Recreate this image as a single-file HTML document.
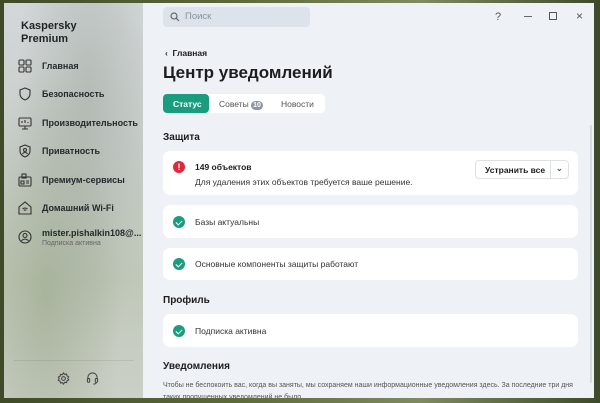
<!DOCTYPE html><html><head><meta charset="utf-8"><style>
*{margin:0;padding:0;box-sizing:border-box}
body{width:600px;height:403px;overflow:hidden;position:relative;font-family:"Liberation Sans","Noto Sans CJK SC",sans-serif;background:linear-gradient(90deg,#3f4a28,#5d6a3a 40%,#7f8a60 70%,#3d4a2a);color:#1d1d1f}
.win{position:absolute;left:4px;top:3px;width:590px;height:395px;overflow:hidden;background:#eef1f5}
.side{position:absolute;left:0;top:0;width:139px;height:395px;background:
radial-gradient(ellipse at 60% 25%,rgba(150,160,150,.45),transparent 60%),
radial-gradient(ellipse at 30% 75%,rgba(140,155,120,.45),transparent 55%),
linear-gradient(180deg,#d3d7d9,#c8cec9 40%,#c0c8b9 70%,#cbd0c8)}
.logo{position:absolute;left:17px;top:17px;font-size:11px;line-height:13px;font-weight:bold;color:#1f2326}
.nav{position:absolute;left:14px;font-size:9px;font-weight:bold;color:#25292c;display:flex;align-items:center;white-space:nowrap}
.nav svg{width:14px;height:14px;margin-right:10px;flex:none}
.main{position:absolute;left:139px;top:0;width:451px;height:395px}
.search{position:absolute;left:20px;top:4px;width:147px;height:20px;background:#dde3ea;border-radius:4px;font-size:9.5px;color:#8a919a;padding:4px 0 0 22px}
.ctl{position:absolute;top:8px;font-size:11px;color:#555}
.back{position:absolute;left:22px;top:45px;font-size:8.5px;font-weight:bold}
h1{position:absolute;left:20px;top:60px;font-size:17px;font-weight:bold}
.tabs{position:absolute;left:20px;top:91px;width:162px;height:19px;background:#fff;border-radius:4px;font-size:8.5px}
.tabs span{position:absolute;top:5px}
.sec{position:absolute;left:20px;font-size:10px;font-weight:bold}
.card{position:absolute;left:20px;width:415px;background:#fff;border-radius:7px;font-size:8.5px}
.ok{position:absolute;left:10px;width:12px;height:12px;border-radius:50%;background:#1a9d7f}
.ok:after{content:"";position:absolute;left:3.5px;top:2.5px;width:3px;height:5px;border:solid #fff;border-width:0 1.5px 1.5px 0;transform:rotate(45deg)}
.card .t{position:absolute;left:32px}
</style></head><body>
<div class="win">
<div class="side">
<div class="logo">Kaspersky<br>Premium</div>
<div class="nav" style="top:56px"><svg viewBox="0 0 14 14" fill="none" stroke="#333" stroke-width="1.1"><rect x="1" y="1" width="5" height="5" rx="1"/><rect x="8" y="1" width="5" height="5" rx="1"/><rect x="1" y="8" width="5" height="5" rx="1"/><rect x="8" y="8" width="5" height="5" rx="1"/></svg>Главная</div>
<div class="nav" style="top:84px"><svg viewBox="0 0 14 14" fill="none" stroke="#333" stroke-width="1.1"><path d="M7 1L2 3v4c0 3 2.5 5 5 6 2.5-1 5-3 5-6V3z"/></svg>Безопасность</div>
<div class="nav" style="top:113px"><svg viewBox="0 0 14 14" fill="none" stroke="#333" stroke-width="1.1"><rect x="1" y="2" width="12" height="8" rx="1"/><path d="M7 10v3M4 13h6M4 7V5M7 7V4M10 7V6"/></svg>Производительность</div>
<div class="nav" style="top:141px"><svg viewBox="0 0 14 14" fill="none" stroke="#333" stroke-width="1.1"><path d="M7 1L2 3v4c0 3 2.5 5 5 6 2.5-1 5-3 5-6V3z"/><circle cx="7" cy="6" r="1.5"/><path d="M4.5 10c1-2 4-2 5 0"/></svg>Приватность</div>
<div class="nav" style="top:170px"><svg viewBox="0 0 14 14" fill="none" stroke="#333" stroke-width="1.1"><rect x="1" y="4" width="12" height="9" rx="1"/><rect x="4" y="1" width="4" height="4"/><path d="M8 8h3M8 10h3M3 8h3v3H3z"/></svg>Премиум-сервисы</div>
<div class="nav" style="top:198px"><svg viewBox="0 0 14 14" fill="none" stroke="#333" stroke-width="1.1"><path d="M1 6l6-5 6 5v7H1z"/><path d="M4.5 8c1.5-1.3 3.5-1.3 5 0M5.8 9.5c.7-.6 1.7-.6 2.4 0"/></svg>Домашний Wi-Fi</div>
<div class="nav" style="top:225px;align-items:flex-start"><svg viewBox="0 0 14 14" fill="none" stroke="#333" stroke-width="1.1" style="margin-top:2px"><circle cx="7" cy="7" r="6"/><circle cx="7" cy="5.5" r="2"/><path d="M3.5 11c1.5-2.5 5.5-2.5 7 0"/></svg><div>mister.pishalkin108@...<div style="font-size:7px;font-weight:normal;color:#666;margin-top:2px">Подписка активна</div></div></div>
<div style="position:absolute;left:10px;top:357px;width:120px;height:1px;background:rgba(0,0,0,.08)"></div>
<svg style="position:absolute;left:53px;top:369px" width="13" height="13" viewBox="0 0 14 14" fill="none" stroke="#444" stroke-width="1.1"><circle cx="7" cy="7" r="2"/><path d="M7 1l1.3 1.6 2-.5.4 2 1.9.9-1 1.8 1 1.8-1.9.9-.4 2-2-.5L7 13l-1.3-1.6-2 .5-.4-2-1.9-.9 1-1.8-1-1.8 1.9-.9.4-2 2 .5z"/></svg>
<svg style="position:absolute;left:82px;top:369px" width="13" height="13" viewBox="0 0 14 14" fill="none" stroke="#444" stroke-width="1.1"><path d="M2 8V6a5 5 0 0110 0v2"/><rect x="1.5" y="7" width="2.5" height="4" rx="1"/><rect x="10" y="7" width="2.5" height="4" rx="1"/><path d="M11 11c0 1.5-1.5 2-3 2"/></svg>
</div>
<div class="main">
<div class="search"><svg style="position:absolute;left:7px;top:5px" width="10" height="10" viewBox="0 0 10 10" fill="none" stroke="#666" stroke-width="1.2"><circle cx="4" cy="4" r="3"/><path d="M6.3 6.3L9 9"/></svg>Поиск</div>
<div class="ctl" style="left:352px">?</div>
<div style="position:absolute;left:381px;top:13px;width:8px;height:1px;background:#666"></div>
<div style="position:absolute;left:406px;top:9px;width:8px;height:8px;border:1px solid #555"></div>
<div class="ctl" style="left:433px;top:6px;font-size:12px">×</div>
<div class="back">‹&nbsp;&nbsp;Главная</div>
<h1>Центр уведомлений</h1>
<div class="tabs"><div style="position:absolute;left:0;top:0;width:46px;height:19px;background:#1a9d7f;border-radius:4px"></div>
<span style="left:10px;color:#fff;font-weight:bold">Статус</span>
<span style="left:56px;color:#555">Советы <b style="display:inline-block;background:#8d96a3;color:#fff;border-radius:6px;font-size:7px;padding:1px 2px">10</b></span>
<span style="left:118px;color:#555">Новости</span></div>
<div style="position:absolute;left:447px;top:122px;width:2px;height:258px;background:#d6dbe1;border-radius:1px"></div>
<div class="sec" style="top:129px">Защита</div>
<div class="card" style="top:148px;height:44px">
<div style="position:absolute;left:10px;top:10px;width:12px;height:12px;border-radius:50%;background:#e0283c;color:#fff;font-size:9px;font-weight:bold;text-align:center;line-height:12px">!</div>
<div class="t" style="top:11px;font-weight:bold">149 объектов</div>
<div class="t" style="top:26px;color:#333">Для удаления этих объектов требуется ваше решение.</div>
<div style="position:absolute;left:312px;top:9px;width:94px;height:19px;border:1px solid #dde1e6;border-radius:4px;font-weight:bold"><span style="position:absolute;left:9px;top:4px">Устранить все</span><div style="position:absolute;left:74px;top:0;width:1px;height:17px;background:#dde1e6"></div><span style="position:absolute;left:80px;top:3px;font-size:8px;color:#555">⌄</span></div>
</div>
<div class="card" style="top:202px;height:33px"><div class="ok" style="top:11px"></div><div class="t" style="top:12px;color:#333">Базы актуальны</div></div>
<div class="card" style="top:245px;height:32px"><div class="ok" style="top:10px"></div><div class="t" style="top:11px;color:#333">Основные компоненты защиты работают</div></div>
<div class="sec" style="top:292px">Профиль</div>
<div class="card" style="top:311px;height:33px"><div class="ok" style="top:11px"></div><div class="t" style="top:12px;color:#333">Подписка активна</div></div>
<div class="sec" style="top:358px">Уведомления</div>
<div style="position:absolute;left:20px;top:377px;width:420px;font-size:7px;line-height:12px;color:#555">Чтобы не беспокоить вас, когда вы заняты, мы сохраняем наши информационные уведомления здесь. За последние три дня таких пропущенных уведомлений не было.</div>
</div>
</div>
</body></html>
